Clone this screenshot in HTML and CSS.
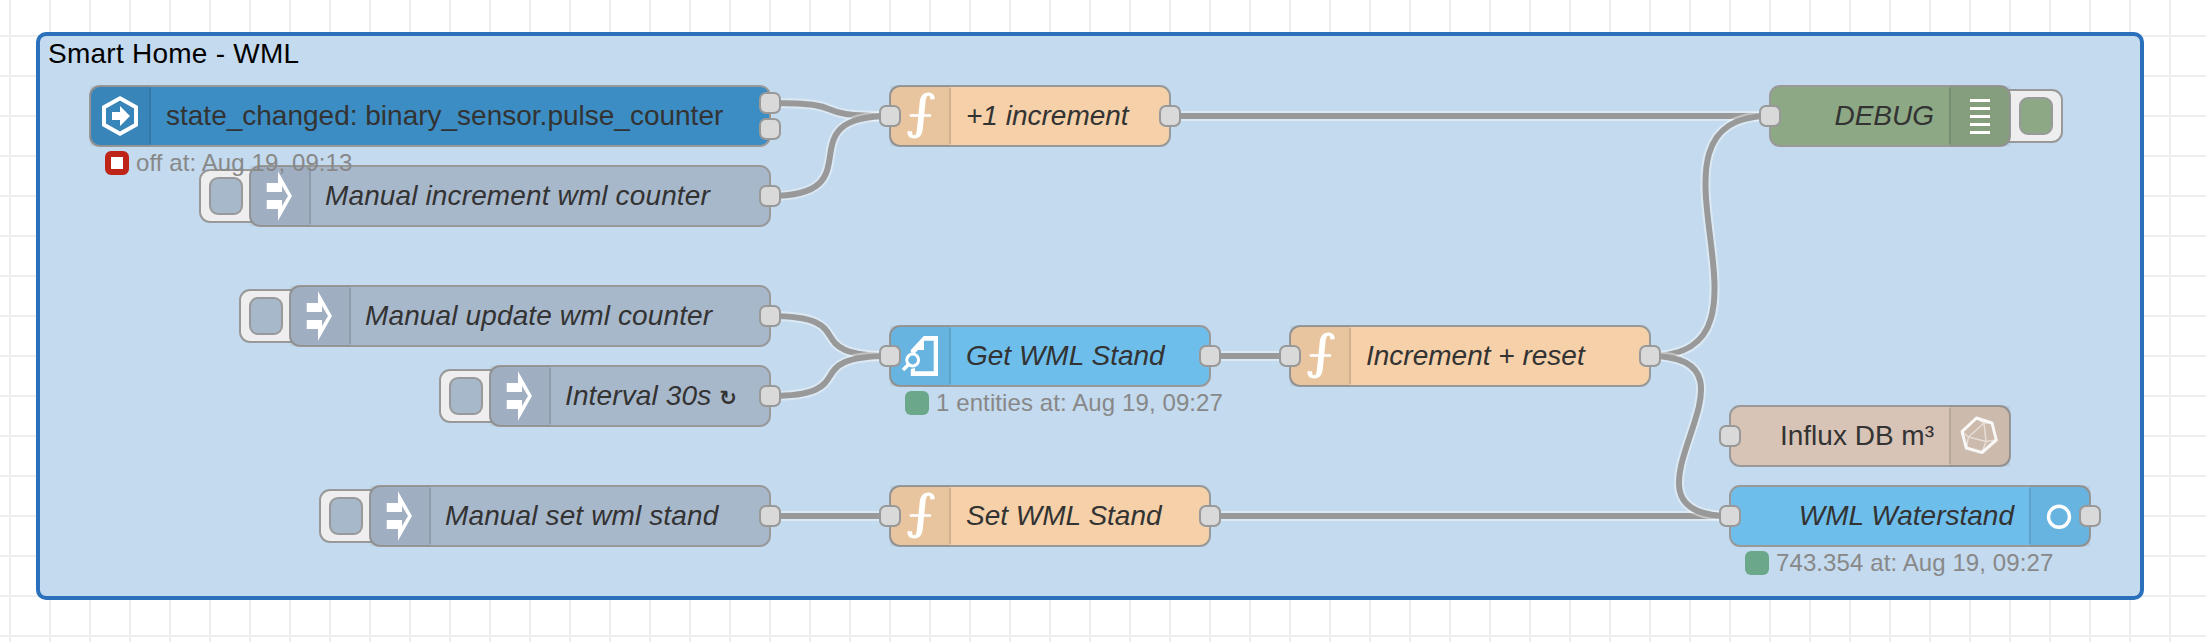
FILE: index.html
```html
<!DOCTYPE html>
<html lang="en">
<head>
<meta charset="utf-8">
<title>Smart Home - WML</title>
<link rel="stylesheet" href="styles.css">
</head>
<body>
<svg class="defs" width="0" height="0" aria-hidden="true">
  <symbol id="i-inject" viewBox="0 0 60 60"><path fill="#fff" d="M16.7 17H28V5.3L42 30 28 54.7V43H16.7V34H32V40L38 30 32 20V26H16.7Z"/></symbol>
  <symbol id="i-fn" viewBox="0 0 60 60">
    <path fill="#fff" d="M44.8 13.3C44.8 9 42 6.6 38.4 6.6C33 6.6 30.2 10.5 29.6 17L27 43C26.5 47.5 26 49.3 24 49.3C22.3 49.3 22.2 48 22 45.2H17.3C17.3 50 20 52.4 24.3 52.4C30.4 52.4 32.2 48 32.9 42L35.6 15.5C36 11.5 36.8 9.7 38.5 9.7C40 9.7 40.2 11 40.4 13.6Z"/>
    <path fill="#fff" d="M19.8 28.2H41V30.8H19.8Z"/>
  </symbol>
  <symbol id="i-event" viewBox="0 0 60 60">
    <path fill="none" stroke="#fff" stroke-width="4" d="M30 12.3 46 21.2V38.8L30 47.7 14 38.8V21.2Z"/>
    <path fill="#fff" d="M22 26H30V20L40 30 30 40V34H22Z"/>
  </symbol>
  <symbol id="i-get" viewBox="0 0 60 60">
    <path fill="#fff" fill-rule="evenodd" d="M20.8 26.5V24L33.8 10H48V50H20.8V43L25 42V45.3H43.7V14.7H34V24H28L25 27Z"/>
    <circle cx="22.7" cy="34" r="5.9" fill="none" stroke="#fff" stroke-width="3"/>
    <path stroke="#fff" stroke-width="3.6" d="M18.7 38.2 13 44"/>
  </symbol>
  <symbol id="i-debug" viewBox="0 0 60 60"><path fill="#fff" d="M20 13H40V16H20ZM20 21H40V24H20ZM20 29H40V32H20ZM20 37H40V40H20ZM20 45H40V48H20Z"/></symbol>
  <symbol id="i-influx" viewBox="0 0 60 60">
    <g fill="none" stroke="#fff" stroke-linejoin="round">
      <path stroke-width="3" opacity=".88" d="M26.5 12 42 17 46.3 34 32 46.5 16.3 42 12 25.7Z"/>
      <path stroke-width="1.6" opacity=".5" d="M26.5 12 34 17 42 17M12 25.7 18.5 31 16.3 42M34 17 18.5 31 36 35.5ZM46.3 34 36 35.5 32 46.5M12 25.7 26.5 12"/>
    </g>
  </symbol>
  <symbol id="i-state" viewBox="0 0 60 60"><circle cx="29" cy="30.8" r="10.5" fill="none" stroke="#fff" stroke-width="3.4"/></symbol>
</svg>

<main class="canvas">
  <section class="group"><h1 class="group-title">Smart Home - WML</h1></section>

  <svg class="wires" width="2206" height="642" viewBox="0 0 2206 642">
    <g><path class="halo" d="M770 103C860.5 103 799.5 116 890 116"/><path class="wire" d="M770 103C860.5 103 799.5 116 890 116"/></g>
    <g><path class="halo" d="M770 196C878 196 782 116 890 116"/><path class="wire" d="M770 196C878 196 782 116 890 116"/></g>
    <g><path class="halo" d="M1170 116H1770"/><path class="wire" d="M1170 116H1770"/></g>
    <g><path class="halo" d="M770 316C865 316 795 356 890 356"/><path class="wire" d="M770 316C865 316 795 356 890 356"/></g>
    <g><path class="halo" d="M770 396C865 396 795 356 890 356"/><path class="wire" d="M770 396C865 396 795 356 890 356"/></g>
    <g><path class="halo" d="M1210 356H1290"/><path class="wire" d="M1210 356H1290"/></g>
    <g><path class="halo" d="M770 516H890"/><path class="wire" d="M770 516H890"/></g>
    <g><path class="halo" d="M1210 516H1730"/><path class="wire" d="M1210 516H1730"/></g>
    <g><path class="halo" d="M1650 356C1800 356 1620 116 1770 116"/><path class="wire" d="M1650 356C1800 356 1620 116 1770 116"/></g>
    <g><path class="halo" d="M1650 356C1784 356 1596 516 1730 516"/><path class="wire" d="M1650 356C1784 356 1596 516 1730 516"/></g>
  </svg>

  <div class="node event n-event">
    <div class="body"><span class="icon"><svg><use href="#i-event"/></svg></span><span class="label">state_changed: binary_sensor.pulse_counter</span></div>
    <i class="port out upper"></i><i class="port out lower"></i>
    <div class="status"><i class="dot ring"></i><span>off at: Aug 19, 09:13</span></div>
  </div>
  <div class="node inject n-increment">
    <div class="button"><i></i></div>
    <div class="body"><span class="icon"><svg><use href="#i-inject"/></svg></span><span class="label named">Manual increment wml counter</span></div>
    <i class="port out"></i>
  </div>
  <div class="node inject n-update">
    <div class="button"><i></i></div>
    <div class="body"><span class="icon"><svg><use href="#i-inject"/></svg></span><span class="label named">Manual update wml counter</span></div>
    <i class="port out"></i>
  </div>
  <div class="node inject n-interval">
    <div class="button"><i></i></div>
    <div class="body"><span class="icon"><svg><use href="#i-inject"/></svg></span><span class="label named">Interval 30s <span class="repeat">↻</span></span></div>
    <i class="port out"></i>
  </div>
  <div class="node inject n-set">
    <div class="button"><i></i></div>
    <div class="body"><span class="icon"><svg><use href="#i-inject"/></svg></span><span class="label named">Manual set wml stand</span></div>
    <i class="port out"></i>
  </div>
  <div class="node function n-plus">
    <div class="body"><span class="icon"><svg><use href="#i-fn"/></svg></span><span class="label named">+1 increment</span></div>
    <i class="port in"></i><i class="port out"></i>
  </div>
  <div class="node entity n-get">
    <div class="body"><span class="icon"><svg><use href="#i-get"/></svg></span><span class="label named">Get WML Stand</span></div>
    <i class="port in"></i><i class="port out"></i>
    <div class="status"><i class="dot"></i><span>1 entities at: Aug 19, 09:27</span></div>
  </div>
  <div class="node function n-setfn">
    <div class="body"><span class="icon"><svg><use href="#i-fn"/></svg></span><span class="label named">Set WML Stand</span></div>
    <i class="port in"></i><i class="port out"></i>
  </div>
  <div class="node function n-reset">
    <div class="body"><span class="icon"><svg><use href="#i-fn"/></svg></span><span class="label named">Increment + reset</span></div>
    <i class="port in"></i><i class="port out"></i>
  </div>
  <div class="node debug right n-debug">
    <div class="button"><i></i></div>
    <div class="body"><span class="icon"><svg><use href="#i-debug"/></svg></span><span class="label named">DEBUG</span></div>
    <i class="port in"></i>
  </div>
  <div class="node influx right n-influx">
    <div class="body"><span class="icon"><svg><use href="#i-influx"/></svg></span><span class="label">Influx DB m³</span></div>
    <i class="port in"></i>
  </div>
  <div class="node entity right n-water">
    <div class="body"><span class="icon"><svg><use href="#i-state"/></svg></span><span class="label named">WML Waterstand</span></div>
    <i class="port in"></i><i class="port out"></i>
    <div class="status"><i class="dot"></i><span>743.354 at: Aug 19, 09:27</span></div>
  </div>
</main>
</body>
</html>
```
FILE: styles.css
```css
* { box-sizing: border-box; }
body { margin: 0; font-family: "Liberation Sans", Arial, sans-serif; }
.defs { position: absolute; }

.canvas {
  position: relative;
  width: 2206px;
  height: 642px;
  overflow: hidden;
  background-color: #fff;
  background-image:
    linear-gradient(90deg, #eee 2px, transparent 2px),
    linear-gradient(#eee 2px, transparent 2px);
  background-size: 40px 40px;
  background-position: 9px 35px;
}

.group {
  position: absolute;
  left: 36px;
  top: 32px;
  width: 2108px;
  height: 568px;
  padding: 1px 8px;
  border: 4px solid #2a70bb;
  border-radius: 10px;
  background: #c4daee;
}
.group-title { margin: 0; font-size: 28px; font-weight: 400; line-height: 34px; letter-spacing: .25px; color: #000; }

.wires { position: absolute; left: 0; top: 0; }
.wire { fill: none; stroke: #999; stroke-width: 6; }
.halo { fill: none; stroke: #fff; stroke-opacity: .4; stroke-width: 10; }

/* Nodes sit on the free canvas; each box includes its 2px outline. */
.node { position: absolute; height: 62px; }
.body {
  position: relative;
  display: flex;
  align-items: center;
  height: 62px;
  border: 2px solid #999;
  border-radius: 11px;
  background: var(--fill);
}
.right .body { flex-direction: row-reverse; }
.icon {
  flex: none;
  width: 61px;
  height: 60px;
  margin: -1px 0 -1px -1px;
  background: rgba(0, 0, 0, .05);
  background-image: linear-gradient(rgba(0, 0, 0, .1), rgba(0, 0, 0, .1));
  background-size: 2px 56px;
  background-position: right 2px;
  background-repeat: no-repeat;
}
.right .icon { margin: -1px -1px -1px 0; background-position: left 2px; }
.icon svg { display: block; width: 60px; height: 60px; }
.right .icon svg { margin-left: 1px; }
.label { padding: 0 15px; font-size: 28px; line-height: 34px; color: #333; white-space: pre; }
.named { font-style: italic; }
.inject .named { margin-left: -1px; letter-spacing: .13px; }
.repeat { font: bold 21px/20px "DejaVu Sans", sans-serif; }

.port {
  position: absolute;
  top: 20px;
  width: 22px;
  height: 22px;
  border: 2px solid #999;
  border-radius: 7px;
  background: #d9d9d9;
}
.in { left: -10px; }
.out { right: -10px; }
.upper { top: 7px; }
.lower { top: 33px; }

.button {
  position: absolute;
  left: -50px;
  top: 4px;
  width: 66px;
  height: 54px;
  padding: 6px 8px;
  border: 2px solid #999;
  border-radius: 11px;
  background: #eee;
}
.button i {
  display: block;
  width: 34px;
  height: 38px;
  border: 2px solid #999;
  border-radius: 9px;
  background: var(--fill);
}
.right .button { left: auto; right: -52px; padding-left: 20px; }

.status {
  position: absolute;
  z-index: 2;
  left: 16px;
  top: 66px;
  display: flex;
  align-items: center;
  gap: 7px;
  height: 24px;
  font-size: 24px;
  line-height: 26px;
  letter-spacing: .1px;
  color: #888;
  white-space: pre;
}
.dot { width: 24px; height: 24px; border-radius: 6px; background: #6ba789; }
.ring { border: 6px solid #be2518; background: #fff; }

.event { --fill: #3c8dc3; }
.inject { --fill: #a8b8cb; }
.function { --fill: #f5d0a8; }
.entity { --fill: #6ebeec; }
.debug { --fill: #8da885; }
.influx { --fill: #d7c4b7; }

.n-event { left: 89px; top: 85px; width: 682px; }
.n-increment { left: 249px; top: 165px; width: 522px; }
.n-update { left: 289px; top: 285px; width: 482px; }
.n-interval { left: 489px; top: 365px; width: 282px; }
.n-set { left: 369px; top: 485px; width: 402px; }
.n-plus { left: 889px; top: 85px; width: 282px; }
.n-get { left: 889px; top: 325px; width: 322px; }
.n-setfn { left: 889px; top: 485px; width: 322px; }
.n-reset { left: 1289px; top: 325px; width: 362px; }
.n-debug { left: 1769px; top: 85px; width: 242px; }
.n-influx { left: 1729px; top: 405px; width: 282px; }
.n-water { left: 1729px; top: 485px; width: 362px; }
```
